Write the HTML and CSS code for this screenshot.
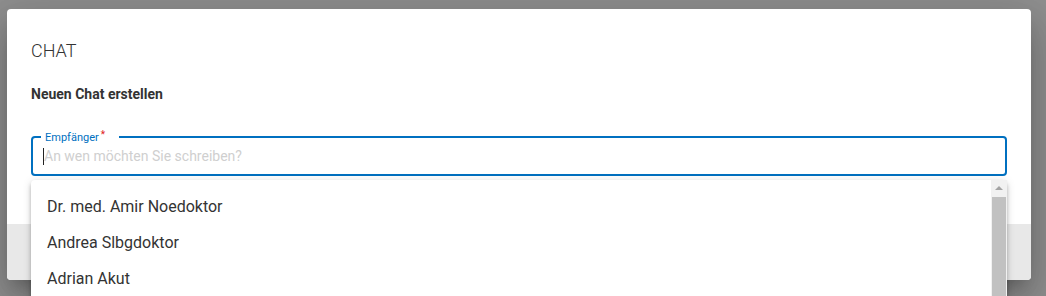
FILE: index.html
```html
<!DOCTYPE html>
<html lang="de">

<head>
    <meta charset="UTF-8">
    <meta name="viewport" content="width=device-width, initial-scale=1.0">
    <title>Chat</title>
    <link rel="stylesheet" href="styles.css">
</head>

<body>
    <div class="overlay">
        <div class="dialog">
            <div class="dialogBody">
                <h2 class="title">CHAT</h2>
                <h3 class="subtitle">Neuen Chat erstellen</h3>

                <div class="field">
                    <label class="fieldLabel">Empfänger<span class="req">*</span></label>
                    <span class="caret"></span>
                    <input type="text" class="fieldInput" placeholder="An wen möchten Sie schreiben?">

                    <div class="dropdown">
                        <ul class="options">
                            <li>Dr. med. Amir Noedoktor</li>
                            <li>Andrea Slbgdoktor</li>
                            <li>Adrian Akut</li>
                        </ul>
                        <div class="scrollbar">
                            <span class="arrowUp"></span>
                            <div class="thumb"></div>
                        </div>
                    </div>
                </div>
            </div>
            <div class="dialogFooter"></div>
        </div>
    </div>
</body>

</html>
```

FILE: styles.css
```css
* {
    margin: 0;
    padding: 0;
    box-sizing: border-box;
}

body {
    background-color: #8f8f8f;
    font-family: Roboto, "Liberation Sans", sans-serif;
    overflow: hidden;
}

.overlay {
    height: 296px;
    padding: 9px 15px 0 7px;
}

.dialog {
    width: 1024px;
    height: 271px;
    background: white;
    border-radius: 4px;
    box-shadow: 0 11px 15px -7px rgba(0, 0, 0, 0.2), 0 24px 38px 3px rgba(0, 0, 0, 0.14), 0 9px 46px 8px rgba(0, 0, 0, 0.12);
    display: flex;
    flex-direction: column;
}

.dialogBody {
    height: 215px;
    padding: 30px 24px 0 24px;
}

.dialogFooter {
    flex: 1;
    background: #e8e8e8;
    border-radius: 0 0 4px 4px;
}

.title {
    font-size: 18px;
    font-weight: 300;
    line-height: 24px;
    color: #333;
}

.subtitle {
    margin-top: 22px;
    font-size: 14px;
    font-weight: 700;
    line-height: 18px;
    color: #333;
}

.field {
    position: relative;
    margin-top: 33px;
    height: 40px;
    border: 2px solid #0070c0;
    border-radius: 4px;
    display: flex;
    align-items: center;
    padding-left: 10px;
}

.fieldLabel {
    position: absolute;
    top: -10px;
    left: 8px;
    padding: 0 14px 0 4px;
    background: white;
    font-size: 11px;
    line-height: 14px;
    color: #0070c0;
}

.req {
    color: #e02020;
    font-size: 10px;
    vertical-align: 3px;
    margin-left: 2px;
}

.caret {
    width: 1px;
    height: 17px;
    background: #222;
}

.fieldInput {
    flex: 1;
    border: 0;
    outline: none;
    background: transparent;
    font-family: inherit;
    font-size: 14px;
    color: #333;
}

.fieldInput::placeholder {
    color: #cfcfcf;
}

.dropdown {
    position: absolute;
    top: 42px;
    left: -2px;
    width: 976px;
    height: 120px;
    background: white;
    box-shadow: 0 2px 4px -1px rgba(0, 0, 0, 0.2), 0 4px 5px 0 rgba(0, 0, 0, 0.14), 0 1px 10px 0 rgba(0, 0, 0, 0.12);
    border-radius: 4px 4px 0 0;
    display: flex;
}

.options {
    flex: 1;
    list-style: none;
    padding-top: 9px;
}

.options li {
    height: 36px;
    line-height: 36px;
    padding-left: 16px;
    font-size: 16px;
    color: #333;
}

.scrollbar {
    width: 16px;
    background: #f1f1f1;
    display: flex;
    flex-direction: column;
    align-items: center;
}

.arrowUp {
    margin-top: 6px;
    width: 0;
    height: 0;
    border-left: 4px solid transparent;
    border-right: 4px solid transparent;
    border-bottom: 4px solid #a3a3a3;
}

.thumb {
    margin-top: 7px;
    width: 14px;
    flex: 1;
    background: #c1c1c1;
}
```
